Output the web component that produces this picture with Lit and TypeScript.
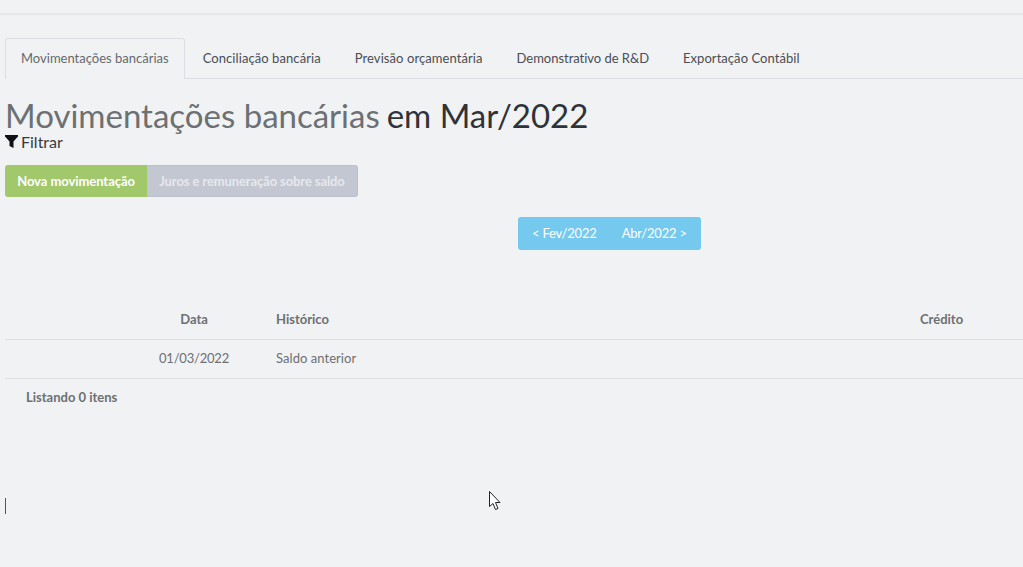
import { LitElement, html, css } from "lit";
import { customElement } from "lit/decorators.js";

const tabs = ["Movimentações bancárias", "Conciliação bancária", "Previsão orçamentária", "Demonstrativo de R&D", "Exportação Contábil"];

@customElement("app-root")
export class AppRoot extends LitElement {
  static styles = css`
    :host { display: block; position: relative; height: 567px; overflow: hidden; background: #f0f2f4; font-family: Lato, sans-serif; color: #6d7073; font-size: 13px; }
    .topbar { height: 13px; border-bottom: 2px solid #e5e7ea; }
    .content { padding: 23px 0 0 5px; }
    .tabs { display: flex; height: 40px; border-bottom: 1px solid #dcdee3; box-sizing: content-box; }
    .tab { box-sizing: border-box; height: 41px; padding: 0 15px; margin-right: 2px; font-size: 13px; line-height: 38px; letter-spacing: 0.08px; color: #4a4d55; border: 1px solid transparent; border-bottom: 0; white-space: nowrap; }
    .tab.active { color: #676a6c; letter-spacing: 0; border-color: #dcdee3; border-radius: 3px 3px 0 0; background: #f0f2f4; }
    .tab:nth-child(4) { letter-spacing: -0.03px; }
    .tab:nth-child(5) { letter-spacing: 0.05px; }
    h1 { margin: 18px 0 0; font-size: 33px; font-weight: 400; line-height: 37px; color: #2f3238; white-space: nowrap; }
    h1 span { color: #6d7073; margin-right: -1.5px; }
    .filter { display: flex; align-items: center; gap: 3px; height: 15px; font-size: 16px; color: #3a3a3a; line-height: 15px; }
    .filter svg { width: 13px; height: 13px; display: block; }
    .actions { display: flex; margin-top: 16px; height: 32px; }
    .btn { box-sizing: border-box; height: 32px; border: 0; font: 700 13px/32px Lato, sans-serif; color: #fff; white-space: nowrap; }
    .new { width: 142px; text-align: center; background: #a1c86a; border-radius: 3px 0 0 3px; letter-spacing: -0.06px; }
    .juros { width: 211px; text-align: center; background: #c3c7d2; color: #e6e8ed; border-radius: 0 3px 3px 0; border: 1px solid #bcc0cc; border-left: 0; line-height: 30px; letter-spacing: -0.1px; }
    .nav-row { display: flex; justify-content: flex-start; margin: 20px 0 0 513px; }
    .nav { display: flex; width: 183px; height: 33px; background: #75c9ef; border-radius: 3px; color: #fff; font-size: 13px; line-height: 33px; letter-spacing: -0.2px; }
    .nav span { white-space: nowrap; }
    .nav span:first-child { margin-left: 14px; }
    .nav span:last-child { margin-left: 25px; }
    .table { margin-top: 50px; }
    .row { display: grid; grid-template-columns: 139px 100px 32px 1fr auto; height: 39px; line-height: 37px; border-bottom: 1px solid #dcdee3; box-sizing: border-box; font-size: 13px; letter-spacing: 0.05px; }
    .row.head { height: 40px; line-height: 39px; font-weight: 700; letter-spacing: 0; }
    .row > div:nth-child(2) { text-align: center; white-space: nowrap; }
    .row:not(.head) > div:nth-child(2) { letter-spacing: -0.2px; }
    .row > div:nth-child(5) { padding-right: 59px; min-width: 44px; }
    .count { margin: 10px 0 0 21px; font-weight: 700; line-height: 16px; font-size: 13px; }
    .caret { position: absolute; left: 5px; top: 498px; width: 1px; height: 16px; background: #555; }
    .pointer { position: absolute; left: 489px; top: 491px; width: 13px; height: 20px; }
  `;

  render() {
    return html`
      <div class="topbar"></div>
      <div class="content">
        <div class="tabs">
          ${tabs.map((t, i) => html`<div class="tab ${i === 0 ? "active" : ""}">${t}</div>`)}
        </div>
        <h1><span>Movimentações bancárias</span> em Mar/2022</h1>
        <div class="filter">
          <svg viewBox="0 0 13 13"><path d="M0 0H13V1.5L8.5 6.5V13L4.5 11V6.5L0 1.5Z" fill="#111"/></svg>
          <span>Filtrar</span>
        </div>
        <div class="actions">
          <div class="btn new">Nova movimentação</div>
          <div class="btn juros">Juros e remuneração sobre saldo</div>
        </div>
        <div class="nav-row">
          <div class="nav"><span>&lt; Fev/2022</span><span>Abr/2022 &gt;</span></div>
        </div>
        <div class="table">
          <div class="row head"><div></div><div>Data</div><div></div><div>Histórico</div><div>Crédito</div></div>
          <div class="row"><div></div><div>01/03/2022</div><div></div><div>Saldo anterior</div><div></div></div>
        </div>
        <div class="count">Listando 0 itens</div>
      </div>
      <div class="caret"></div>
      <svg class="pointer" viewBox="0 0 13 20"><path d="M0.5 0.5V15.5L4 12.5L6.5 18.5L9 17.5L6.5 11.5H11Z" fill="#fff" stroke="#222" stroke-width="1"/></svg>
    `;
  }
}
